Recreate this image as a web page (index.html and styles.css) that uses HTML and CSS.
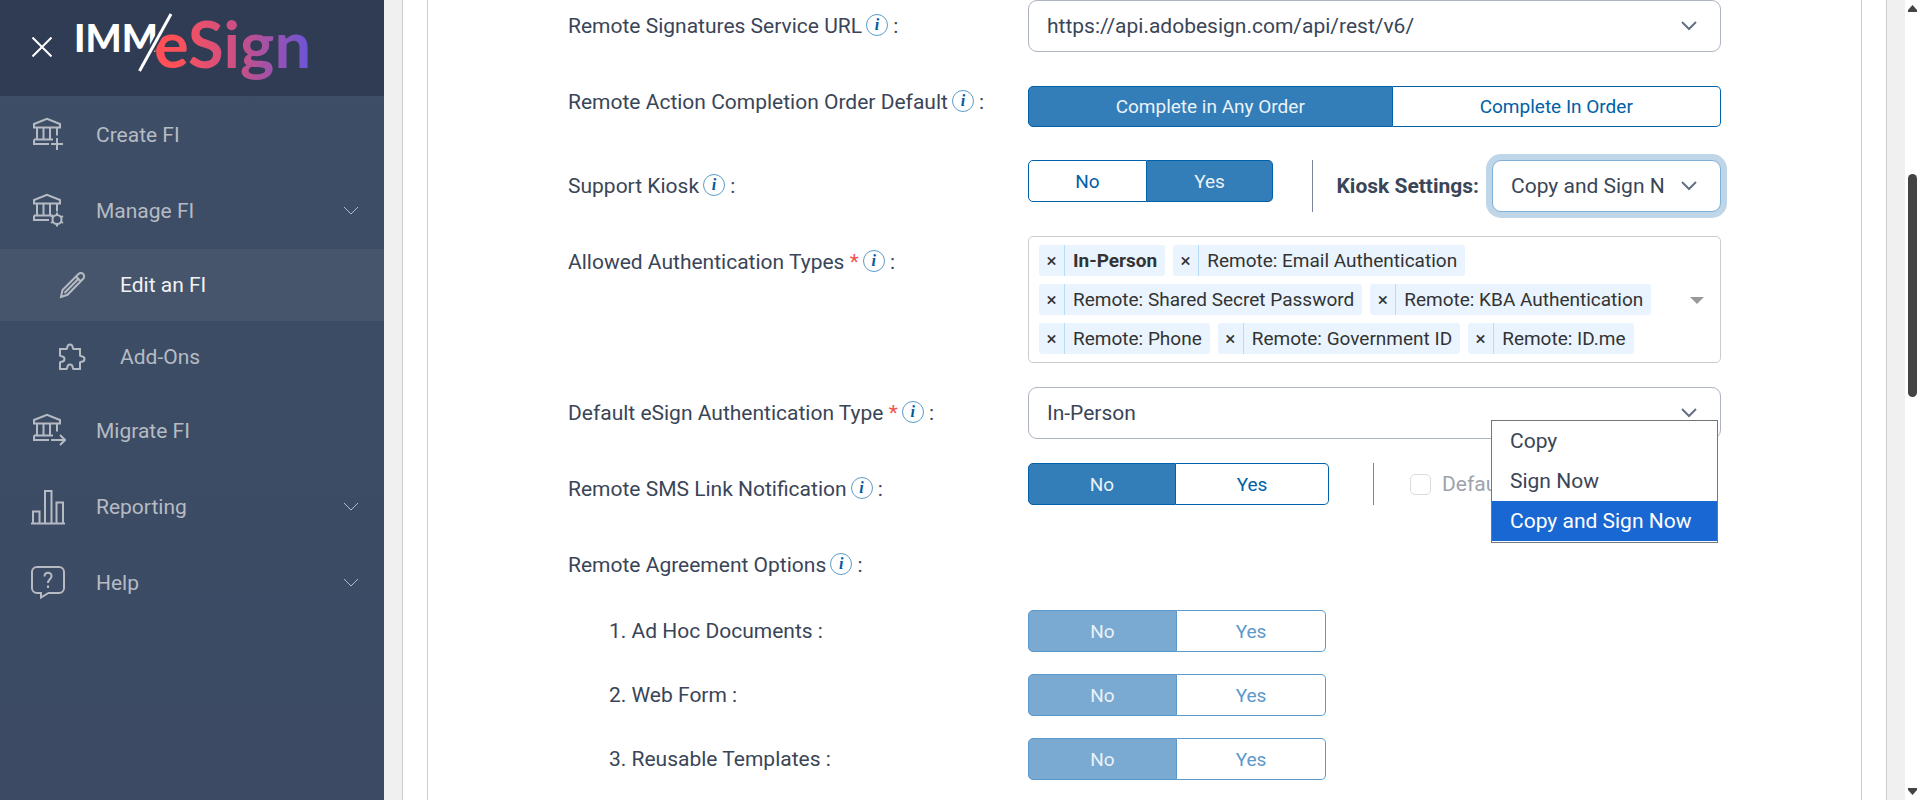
FILE: index.html
```html
<!DOCTYPE html>
<html lang="en">
<head>
  <meta charset="UTF-8" />
  <meta name="viewport" content="width=device-width, initial-scale=1.0" />
  <title>IMM eSign: Edit an FI</title>
  <link rel="stylesheet" href="styles.css">
</head>
<body>

  <!-- shared icon parts -->
  <svg class="sprite" aria-hidden="true">
    <symbol id="bank" viewBox="0 0 36 36">
      <path d="M4 10.500V7L17 1.800L30 7v3.500z M7 11v11.500 M13.500 11v11.500 M20 11v11.500 M27 11v7.500 M4 22.500h19 M4 22.500V27h15" />
    </symbol>
    <symbol id="chevron" viewBox="0 0 16 10">
      <path d="M1 1l7 7l7-7" />
    </symbol>
  </svg>

  <div class="layout">
    <aside class="sidebar">
      <div class="brand">
        <button type="button" class="close-btn" aria-label="Close menu">
          <svg width="20" height="20" viewBox="0 0 20 20"><path d="M0.500 0.500l19 19M19.500 0.500l-19 19" /></svg>
        </button>
        <svg class="logo" width="240" height="88" viewBox="0 0 240 88" role="img" aria-label="IMM eSign">
          <defs>
            <linearGradient id="logoFill" gradientUnits="userSpaceOnUse" x1="90" y1="0" x2="240" y2="0">
              <stop offset="0.1" stop-color="#ff5058" />
              <stop offset="0.55" stop-color="#c4508a" />
              <stop offset="1" stop-color="#6a55d8" />
            </linearGradient>
          </defs>
          <text x="4" y="48" class="logo-imm">IMM</text>
          <text x="84" y="64" class="logo-esign">eSign</text>
          <path d="M69.500 67L101 10" class="logo-slash-gap" />
          <path d="M69.500 67L101 10" class="logo-slash" />
        </svg>
      </div>

      <nav class="menu">
        <a href="#" class="menu-item">
          <svg class="icon" viewBox="0 0 36 36"><use href="#bank" /><path d="M27 21v12M21 27h12" /></svg>
          <span>Create FI</span>
        </a>
        <a href="#" class="menu-item">
          <svg class="icon" viewBox="0 0 36 36"><use href="#bank" /><circle cx="27" cy="26.500" r="4.500" /><path d="M27 19.500v2.500M27 31v2.500M21 23l2.200 1.300M30.800 28.700l2.200 1.300M21 30l2.200-1.300M30.800 24.300l2.200-1.300" /></svg>
          <span>Manage FI</span>
          <svg class="arrow" viewBox="0 0 16 10"><use href="#chevron" /></svg>
        </a>
        <a href="#" class="menu-item sub active">
          <svg class="icon" viewBox="0 0 28 28"><path d="M3 26l1.500-7L20.500 3a3.300 3.300 0 0 1 4.700 4.700L9.500 23.800zM18 5.500l4.700 4.700M20.500 7.800L6.500 22" /></svg>
          <span>Edit an FI</span>
        </a>
        <a href="#" class="menu-item sub">
          <svg class="icon" viewBox="0 0 28 28"><path d="M2 6h6.500c1.500 0-.5-4.500 3.500-4.500s2 4.500 3.500 4.500H22v6.500c0 1.500 4.500-.5 4.500 3.500s-4.500 2-4.500 3.500V26h-6.500c-1.500 0 .5-4.500-3.500-4.500s-2 4.500-3.500 4.500H2v-6.500c0-1.500 4.500.5 4.500-3.500S2 14 2 12.500z" /></svg>
          <span>Add-Ons</span>
        </a>
        <a href="#" class="menu-item">
          <svg class="icon" viewBox="0 0 36 36"><use href="#bank" /><path d="M21 27h14M30 22l5 5l-5 5" /></svg>
          <span>Migrate FI</span>
        </a>
        <a href="#" class="menu-item">
          <svg class="icon" viewBox="0 0 36 36"><path d="M1 34.500h34M3 34V22.500h6.500V34M15 34V2h6.500v32M26.500 34V13.500H33V34" /></svg>
          <span>Reporting</span>
          <svg class="arrow" viewBox="0 0 16 10"><use href="#chevron" /></svg>
        </a>
        <a href="#" class="menu-item">
          <svg class="icon" viewBox="0 0 36 36"><path d="M7 2h22a5 5 0 0 1 5 5v16a5 5 0 0 1-5 5H18.500L11 32.500V28H7a5 5 0 0 1-5-5V7a5 5 0 0 1 5-5z" /><path d="M14.500 11.500c0-5 7-4.800 7-.5c0 3.500-3.500 3-3.500 7M18 20.500v2.500" /></svg>
          <span>Help</span>
          <svg class="arrow" viewBox="0 0 16 10"><use href="#chevron" /></svg>
        </a>
      </nav>
    </aside>

    <main class="content">
      <div class="panel">
        <form class="card">

          <div class="row">
            <label class="row-label" for="serviceUrl">Remote Signatures Service URL<i class="info">i</i> :</label>
            <select id="serviceUrl" class="select">
              <option>https://api.adobesign.com/api/rest/v6/</option>
            </select>
          </div>

          <div class="row">
            <span class="row-label">Remote Action Completion Order Default<i class="info">i</i> :</span>
            <div class="toggle toggle-order">
              <button type="button" class="on">Complete in Any Order</button>
              <button type="button">Complete In Order</button>
            </div>
          </div>

          <div class="row">
            <span class="row-label">Support Kiosk<i class="info">i</i> :</span>
            <div class="inline kiosk">
              <div class="toggle toggle-kiosk">
                <button type="button">No</button>
                <button type="button" class="on">Yes</button>
              </div>
              <div class="kiosk-settings">
                <label for="kioskSettings">Kiosk Settings:</label>
                <select id="kioskSettings" class="select focused">
                  <option>Copy</option>
                  <option>Sign Now</option>
                  <option selected>Copy and Sign Now</option>
                </select>
                <ul class="options" role="listbox" aria-label="Kiosk Settings">
                  <li role="option">Copy</li>
                  <li role="option">Sign Now</li>
                  <li role="option" aria-selected="true" class="selected">Copy and Sign Now</li>
                </ul>
              </div>
            </div>
          </div>

          <div class="row">
            <span class="row-label">Allowed Authentication Types <b class="req">*</b><i class="info">i</i> :</span>
            <div class="tags">
              <span class="tag"><button type="button" aria-label="Remove">×</button><strong>In-Person</strong></span>
              <span class="tag"><button type="button" aria-label="Remove">×</button><span>Remote: Email Authentication</span></span>
              <span class="tag"><button type="button" aria-label="Remove">×</button><span>Remote: Shared Secret Password</span></span>
              <span class="tag"><button type="button" aria-label="Remove">×</button><span>Remote: KBA Authentication</span></span>
              <span class="tag"><button type="button" aria-label="Remove">×</button><span>Remote: Phone</span></span>
              <span class="tag"><button type="button" aria-label="Remove">×</button><span>Remote: Government ID</span></span>
              <span class="tag"><button type="button" aria-label="Remove">×</button><span>Remote: ID.me</span></span>
            </div>
          </div>

          <div class="row">
            <label class="row-label" for="defaultAuth">Default eSign Authentication Type <b class="req">*</b><i class="info">i</i> :</label>
            <select id="defaultAuth" class="select">
              <option>In-Person</option>
            </select>
          </div>

          <div class="row">
            <span class="row-label">Remote SMS Link Notification<i class="info">i</i> :</span>
            <div class="inline sms">
              <div class="toggle toggle-sms">
                <button type="button" class="on">No</button>
                <button type="button">Yes</button>
              </div>
              <div class="sms-default">
                <input type="checkbox" id="smsDefault" disabled>
                <label for="smsDefault">Default</label>
              </div>
            </div>
          </div>

          <div class="row heading">
            <span class="row-label">Remote Agreement Options<i class="info">i</i> :</span>
          </div>

          <div class="row sub-row">
            <span class="row-label">1. Ad Hoc Documents :</span>
            <div class="toggle toggle-option">
              <button type="button" class="on" disabled>No</button>
              <button type="button" disabled>Yes</button>
            </div>
          </div>
          <div class="row sub-row">
            <span class="row-label">2. Web Form :</span>
            <div class="toggle toggle-option">
              <button type="button" class="on" disabled>No</button>
              <button type="button" disabled>Yes</button>
            </div>
          </div>
          <div class="row sub-row">
            <span class="row-label">3. Reusable Templates :</span>
            <div class="toggle toggle-option">
              <button type="button" class="on" disabled>No</button>
              <button type="button" disabled>Yes</button>
            </div>
          </div>

        </form>
      </div>
    </main>

    <div class="scrollbar" aria-hidden="true">
      <svg width="9" height="7" viewBox="0 0 9 7"><path d="M4.500 0L9 5v2H0V5z" /></svg>
      <div class="track"><div class="thumb"></div></div>
      <svg width="9" height="7" viewBox="0 0 9 7"><path d="M4.500 7L9 2V0H0v2z" /></svg>
    </div>
  </div>

</body>
</html>
```

FILE: styles.css
```css
* {
  margin: 0;
  padding: 0;
  box-sizing: border-box;
}

body {
  font-family: Roboto, "Liberation Sans", sans-serif;
  font-size: 21px;
  line-height: 26px;
  color: #3a4557;
  background: #fff;
  overflow: hidden;
}

button,
select,
input {
  font-family: inherit;
}

button {
  cursor: pointer;
}

.sprite {
  display: none;
}

.layout {
  display: flex;
  height: 100vh;
}

/* sidebar */
.sidebar {
  flex: 0 0 384px;
  background: linear-gradient(#3d4e66, #3c4a64);
}

.brand {
  display: flex;
  align-items: flex-start;
  height: 96px;
  padding: 4px 0 0 32px;
  background: #303b54;
}

.close-btn {
  display: flex;
  margin: 33px 18px 0 0;
  background: none;
  border: none;
}

.close-btn path {
  stroke: #fff;
  stroke-width: 2;
}

.logo {
  overflow: visible;
}

.logo-imm {
  font-family: Lato, sans-serif;
  font-weight: 900;
  font-size: 38px;
  fill: #fff;
}

.logo-esign {
  font-family: Lato, sans-serif;
  font-weight: 700;
  font-size: 65px;
  fill: url(#logoFill);
}

.logo-slash-gap {
  stroke: #303b54;
  stroke-width: 7;
}

.logo-slash {
  stroke: #fff;
  stroke-width: 3;
}

.menu {
  padding-top: 1px;
}

.menu-item {
  display: flex;
  align-items: center;
  height: 76px;
  padding: 0 25px 0 30px;
  gap: 30px;
  color: #b6bbc3;
  text-decoration: none;
}

.menu-item.sub {
  height: 72px;
  padding-left: 58px;
  gap: 34px;
}

.menu-item.active {
  background: #47556c;
  color: #f1f2f4;
}

.icon {
  width: 36px;
  height: 36px;
  fill: none;
  stroke: #b6bbc3;
  stroke-width: 2;
}

.sub .icon {
  width: 28px;
  height: 28px;
}

.arrow {
  width: 16px;
  height: 10px;
  margin-left: auto;
  fill: none;
  stroke: #b6bbc3;
}

/* content */
.content {
  flex: 1;
  padding: 0 18px;
  background: #f0f0f0;
}

.panel {
  height: 100%;
  padding: 0 24px;
  background: #fff;
  border: 1px solid #ccc;
  border-width: 0 1px;
}

.card {
  height: 100%;
  padding: 0 140px;
  border: 1px solid #ccc;
  border-width: 0 1px;
}

.row {
  display: grid;
  grid-template-columns: 460px 1fr;
  align-items: start;
  margin-bottom: 24px;
}

.row-label {
  padding: 13px 0;
}

.row.heading {
  margin-bottom: 19px;
}

.sub-row {
  margin-bottom: 22px;
}

.sub-row .row-label {
  padding: 8px 0 8px 41px;
}

.info {
  display: inline-block;
  width: 22px;
  height: 22px;
  margin: -4px 0 -4px 4px;
  border: 1px solid #5c9cc8;
  border-radius: 50%;
  font: italic bold 16px/20px "Liberation Serif", serif;
  text-align: center;
  vertical-align: 3px;
  color: #005a9e;
}

.req {
  font-weight: 400;
  color: #ef5350;
}

.select {
  width: 100%;
  height: 52px;
  padding: 0 56px 0 18px;
  border: 1px solid #adb3c0;
  border-radius: 9px;
  appearance: none;
  background: #fff url("data:image/svg+xml,%3Csvg xmlns='http://www.w3.org/2000/svg' width='16' height='10' fill='none' stroke='%23667085' stroke-width='2'%3E%3Cpath d='M1 1l7 7l7-7'/%3E%3C/svg%3E") no-repeat right 23px center;
  font-size: 21px;
  color: #3a4557;
}

.select.focused {
  width: 229px;
  border-color: #7fb0d6;
  box-shadow: 0 0 0 6px #bfd6e8;
}

/* segmented buttons */
.toggle {
  display: grid;
  height: 42px;
}

.toggle button {
  border: 1px solid #0060a8;
  background: #fff;
  font-size: 19px;
  color: #0060a8;
}

.toggle button:first-child {
  border-radius: 5px 0 0 5px;
}

.toggle button:last-child {
  border-left: none;
  border-radius: 0 5px 5px 0;
}

.toggle .on {
  background: #337eb8;
  color: #ebf2f8;
}

.toggle button:disabled {
  border-color: #5b99cb;
  color: #5b99cb;
}

.toggle .on:disabled {
  background: #7aa9d1;
  color: #ebf2f8;
}

.toggle-order {
  grid-template-columns: 364fr 328fr;
  height: 41px;
  margin: 10px 0 9px;
}

.toggle-kiosk {
  grid-template-columns: 119px 126px;
}

.toggle-sms {
  grid-template-columns: 148px 153px;
}

.toggle-option {
  grid-template-columns: 149px 149px;
}

.inline {
  display: flex;
  justify-content: space-between;
}

.kiosk-settings {
  position: relative;
  display: flex;
  align-items: center;
  gap: 13px;
  padding-left: 24px;
  border-left: 1px solid #7b8798;
}

.kiosk-settings label {
  font-weight: 700;
}

/* open list of the kiosk drop-down */
.options {
  position: absolute;
  top: 260px;
  right: 3px;
  z-index: 2;
  width: 227px;
  padding-bottom: 1px;
  border: 1px solid #767676;
  background: #fff;
  list-style: none;
}

.options li {
  padding: 7px 18px;
}

.options .selected {
  background: #1967d2;
  color: #fff;
}

.tags {
  position: relative;
  display: flex;
  flex-wrap: wrap;
  gap: 8px;
  padding: 8px 60px 8px 10px;
  border: 1px solid #ccc;
  border-radius: 5px;
}

.tags::after {
  content: "";
  position: absolute;
  right: 16px;
  top: 60px;
  border: 7px solid transparent;
  border-top-color: #999;
  border-bottom: none;
}

.tag {
  display: flex;
  height: 31px;
  border-radius: 3px;
  background: #eaf4fe;
  font-size: 19px;
  line-height: 31px;
  color: #333;
}

.tag button {
  width: 26px;
  border: none;
  border-right: 1px solid #b8dbf7;
  background: none;
  font-size: 19px;
  color: #333;
}

.tag span,
.tag strong {
  padding: 0 8px;
}

.sms {
  justify-content: flex-start;
  gap: 44px;
}

.sms-default {
  display: flex;
  align-items: center;
  gap: 11px;
  height: 42px;
  padding-left: 36px;
  border-left: 1px solid #7b8798;
  color: #9ea2ad;
}

.sms-default input {
  width: 21px;
  height: 21px;
  border: 1px solid #dcdcdf;
  border-radius: 5px;
  appearance: none;
  background: #fff;
}

/* window scroll bar */
.scrollbar {
  display: flex;
  flex-direction: column;
  flex: 0 0 15px;
  padding: 5px 3px;
  background: #fff;
  fill: #444;
}

.track {
  flex: 1;
  padding-top: 162px;
}

.thumb {
  height: 223px;
  border-radius: 5px;
  background: #444;
}
```
